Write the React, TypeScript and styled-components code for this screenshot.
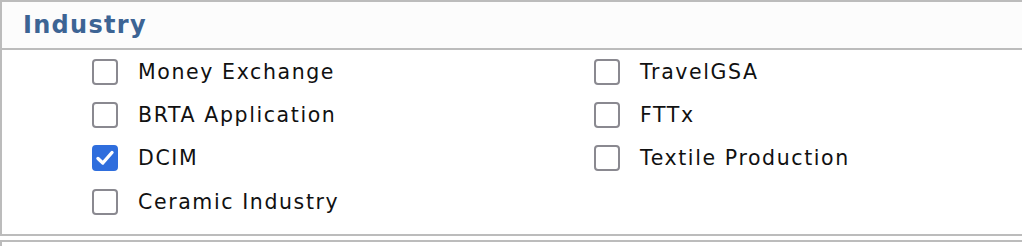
import React from 'react';
import styled, { createGlobalStyle } from 'styled-components';

const GlobalStyle = createGlobalStyle`
  html, body {
    margin: 0;
    padding: 0;
    background: #fff;
  }
  body {
    font-family: 'DejaVu Sans', Verdana, sans-serif;
  }
`;

const borderColor = '#bcbcbc';

const Panel = styled.section`
  border-top: 2px solid ${borderColor};
  border-left: 2px solid ${borderColor};
  border-bottom: 2px solid ${borderColor};
`;

const Header = styled.header`
  height: 46px;
  display: flex;
  align-items: center;
  padding-left: 21px;
  background: #fcfcfc;
  border-bottom: 2px solid ${borderColor};
`;

const Title = styled.h2`
  margin: 0;
  font-size: 24px;
  font-weight: 700;
  color: #3c6494;
  letter-spacing: 1.3px;
`;

const Options = styled.div`
  display: grid;
  grid-template-columns: 502px 1fr;
  grid-auto-rows: 43.33px;
  padding: 0 0 11px 90px;
`;

const Option = styled.label`
  display: flex;
  align-items: center;
  gap: 20px;
  font-size: 20.5px;
  letter-spacing: 1.6px;
  color: #111;
  cursor: pointer;
`;

const Box = styled.span<{ $checked?: boolean }>`
  box-sizing: border-box;
  width: 26px;
  height: 26px;
  border-radius: 4px;
  border: 2px solid ${(p) => (p.$checked ? '#2f6edd' : '#8a8990')};
  background: ${(p) => (p.$checked ? '#2f6edd' : '#fff')};
  display: flex;
  align-items: center;
  justify-content: center;
  flex: none;
`;

const NextPanel = styled.div`
  margin-top: 4px;
  height: 10px;
  border-top: 2px solid ${borderColor};
  border-left: 2px solid ${borderColor};
`;

type Item = { label: string; checked?: boolean };

// grid flows row by row: left column, right column
const items: Item[] = [
  { label: 'Money Exchange' },
  { label: 'TravelGSA' },
  { label: 'BRTA Application' },
  { label: 'FTTx' },
  { label: 'DCIM', checked: true },
  { label: 'Textile Production' },
  { label: 'Ceramic Industry' },
];

function Check({ checked }: { checked?: boolean }) {
  return (
    <Box $checked={checked}>
      {checked && (
        <svg width="22" height="22" viewBox="0 0 22 22" fill="none">
          <path d="M4 11.5 L8.8 16 L18 5.5" stroke="#fff" strokeWidth="3.4" strokeLinecap="round" strokeLinejoin="round" />
        </svg>
      )}
    </Box>
  );
}

export default function App() {
  return (
    <>
      <GlobalStyle />
      <Panel>
        <Header>
          <Title>Industry</Title>
        </Header>
        <Options>
          {items.map((it) => (
            <Option key={it.label}>
              <Check checked={it.checked} />
              <span>{it.label}</span>
            </Option>
          ))}
        </Options>
      </Panel>
      <NextPanel />
    </>
  );
}
